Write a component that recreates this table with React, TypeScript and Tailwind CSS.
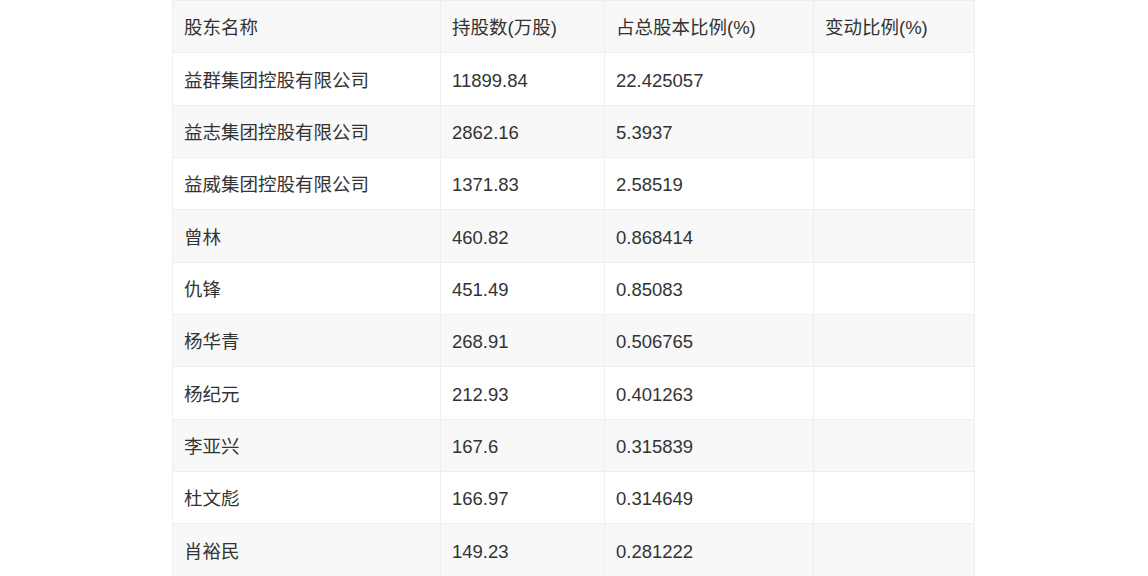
const rows = [
  ['益群集团控股有限公司', '11899.84', '22.425057', ''],
  ['益志集团控股有限公司', '2862.16', '5.3937', ''],
  ['益威集团控股有限公司', '1371.83', '2.58519', ''],
  ['曾林', '460.82', '0.868414', ''],
  ['仇锋', '451.49', '0.85083', ''],
  ['杨华青', '268.91', '0.506765', ''],
  ['杨纪元', '212.93', '0.401263', ''],
  ['李亚兴', '167.6', '0.315839', ''],
  ['杜文彪', '166.97', '0.314649', ''],
  ['肖裕民', '149.23', '0.281222', ''],
];

const header = ['股东名称', '持股数(万股)', '占总股本比例(%)', '变动比例(%)'];

function Row({ cells, shaded }: { cells: string[]; shaded: boolean }) {
  return (
    <div
      className={`grid h-[52.33px] grid-cols-[268px_164px_209px_160px] border-b border-[#eeeeee] ${
        shaded ? 'bg-[#f8f8f8]' : 'bg-white'
      }`}
    >
      {cells.map((c, i) => (
        <div
          key={i}
          className={`flex items-center pl-[11px] pr-3 pt-[3px] ${i < 3 ? 'border-r border-[#eeeeee]' : ''}`}
        >
          {c}
        </div>
      ))}
    </div>
  );
}

export default function App() {
  return (
    <main className="min-h-screen bg-white">
      <div
        className="ml-[172px] w-[803px] border-x border-t border-[#eeeeee] text-[18.5px] text-[#333333]"
        style={{ fontFamily: '"Liberation Sans", "Noto Sans CJK SC", sans-serif' }}
      >
        <Row cells={header} shaded />
        {rows.map((r, i) => (
          <Row key={i} cells={r} shaded={i % 2 === 1} />
        ))}
      </div>
    </main>
  );
}
